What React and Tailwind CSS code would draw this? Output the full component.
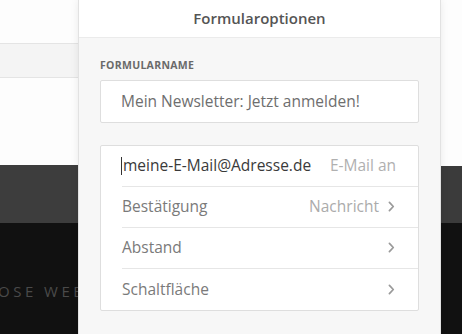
import React from 'react';

const ChevronRight = () => (
  <svg width="7" height="11" viewBox="0 0 7 11" className="shrink-0">
    <path d="M1.4 1.4 L5.3 5.5 L1.4 9.6" fill="none" stroke="#9a9a9a" strokeWidth="1.7" strokeLinecap="round" strokeLinejoin="round" />
  </svg>
);

const OptionRow = ({ label, value, chevron, last }) => (
  <div className="flex h-[41px] items-center pl-[21px]">
    <div className={`flex h-full flex-1 items-center justify-between pr-[23px] ${last ? '' : 'border-b border-[#e6e6e6]'}`}>
      <span className="text-[15.5px] text-[#7a7a7a]">{label}</span>
      <span className="flex items-center gap-[9px] text-[15.5px] text-[#ababab]">
        {value}
        {chevron && <ChevronRight />}
      </span>
    </div>
  </div>
);

const App = () => {
  return (
    <div className="flex h-[334px] w-[462px] overflow-hidden bg-white" style={{ fontFamily: '"Open Sans", Lato, sans-serif' }}>
      {/* Page behind, left */}
      <div className="flex w-[78px] shrink-0 flex-col overflow-hidden">
        <div className="h-[43px] bg-[#fdfdfd]" />
        <div className="h-[35px] border-y border-[#e4e4e4] bg-[#f4f4f4]" />
        <div className="h-[87px] bg-[#fdfdfd]" />
        <div className="h-[58px] bg-[#3d3d3d]" />
        <div className="flex flex-1 items-start overflow-hidden bg-[#111111] pt-[57px]">
          <span className="-ml-[2px] whitespace-nowrap text-[15px] tracking-[3.5px] text-[#4a4a4a]">OSE WEB</span>
        </div>
      </div>

      {/* Options panel */}
      <div className="relative z-10 flex w-[363px] shrink-0 flex-col border-x border-[#e2e2e2] bg-[#f7f7f7] shadow-[0_0_8px_rgba(0,0,0,0.08)]">
        <div className="flex h-[38px] items-center justify-center border-b border-[#ebebeb] bg-white">
          <span className="text-[15px] font-semibold text-[#555]">Formularoptionen</span>
        </div>

        <div className="flex flex-col px-[21px] pt-[20px]">
          <span className="text-[10.5px] font-bold uppercase tracking-[0.3px] text-[#6a6a6a]">Formularname</span>
          <div className="mt-[6px] flex h-[43px] items-center rounded-[2px] border border-[#dedede] bg-white px-[20px]">
            <span className="text-[15.5px] text-[#6e6e6e]">Mein Newsletter: Jetzt anmelden!</span>
          </div>

          <div className="mt-[22px] flex flex-col rounded-[2px] border border-[#dedede] bg-white">
            <div className="flex h-[41px] items-center pl-[21px]">
              <div className="flex h-full flex-1 items-center justify-between border-b border-[#e6e6e6] pr-[22px]">
                <span className="flex items-center text-[15.5px] text-[#3a3a3a]">
                  <span className="-ml-[1px] mr-[1px] inline-block h-[18px] w-[1px] bg-[#333]" />
                  meine-E-Mail@Adresse.de
                </span>
                <span className="text-[15.5px] text-[#b0b0b0]">E-Mail an</span>
              </div>
            </div>
            <OptionRow label="Bestätigung" value="Nachricht" chevron />
            <OptionRow label="Abstand" chevron />
            <OptionRow label="Schaltfläche" chevron last />
          </div>
        </div>
      </div>

      {/* Page behind, right */}
      <div className="flex flex-1 flex-col">
        <div className="h-[166px] bg-[#fdfdfd]" />
        <div className="h-[57px] bg-[#3b3b3b]" />
        <div className="flex-1 bg-[#111111]" />
      </div>
    </div>
  );
};

export default App;
